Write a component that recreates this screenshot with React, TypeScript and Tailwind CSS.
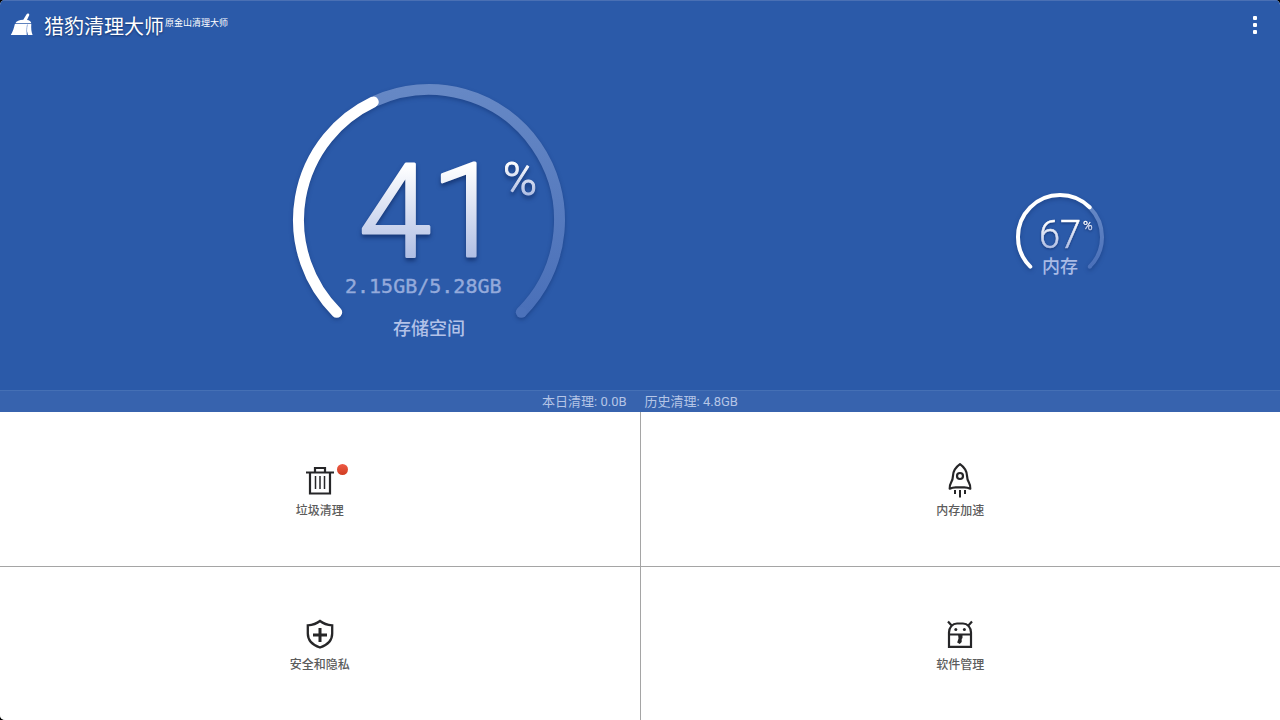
import type { ReactNode } from 'react'

type GaugeProps = {
  percent: number
  size: number
  stroke: number
  label: string
  children: ReactNode
}

// Both dials sweep 270 degrees, starting at the lower left.
function polar(center: number, radius: number, degrees: number) {
  const rad = ((degrees - 90) * Math.PI) / 180
  return `${(center + radius * Math.cos(rad)).toFixed(2)} ${(center + radius * Math.sin(rad)).toFixed(2)}`
}

function arc(center: number, radius: number, from: number, to: number) {
  const large = to - from > 180 ? 1 : 0
  return `M${polar(center, radius, from)} A${radius} ${radius} 0 ${large} 1 ${polar(center, radius, to)}`
}

function Gauge({ percent, size, stroke, label, children }: GaugeProps) {
  const center = size / 2
  const radius = (size - stroke) / 2
  const end = -135 + (percent / 100) * 270

  return (
    <svg
      role="img"
      aria-label={label}
      width={size}
      height={size}
      viewBox={`0 0 ${size} ${size}`}
      className="block overflow-visible"
    >
      <defs>
        <linearGradient id={`digits-${size}`} x1="0" y1="0" x2="0" y2="1">
          <stop offset="0.2" stopColor="#ffffff" />
          <stop offset="0.85" stopColor="#a9b9e2" />
        </linearGradient>
        <linearGradient id={`track-${size}`} x1="0" y1="0" x2="0" y2="1">
          <stop offset="0" stopColor="#6688c5" />
          <stop offset="1" stopColor="#4a70b9" />
        </linearGradient>
      </defs>
      <g fill="none" strokeWidth={stroke} className="drop-shadow-[0_2px_2px_rgba(0,20,70,0.3)]">
        <path d={arc(center, radius, end, 135)} stroke={`url(#track-${size})`} />
        <circle
          cx={center + radius * Math.SQRT1_2}
          cy={center + radius * Math.SQRT1_2}
          r={stroke / 2}
          fill="#4c72ba"
          stroke="none"
        />
        <path d={arc(center, radius, -135, end - 1)} stroke="#fff" strokeLinecap="round" />
      </g>
      {children}
    </svg>
  )
}

function BroomIcon() {
  return (
    <svg width="24" height="24" viewBox="0 0 24 24" fill="#fff" aria-hidden="true">
      <path d="M16.6 1.2c.8-1.5 3.2-.5 2.6 1.1L17 7.1c2.5.3 4 1.3 4.3 3.1H5.4c1-2 4-3.4 7.9-3.4z" />
      <path d="M4.9 11h16.4c-.3 4 0 8 1.3 11H18l-.8-3.5-.4 3.5H.8c1.9-3 3.1-7 4.1-11z" />
      <path d="M17.5 11.5c-1 4-1.2 7-.6 10" fill="none" stroke="#9db4de" />
    </svg>
  )
}

function TrashIcon() {
  return (
    <svg width="40" height="36" viewBox="0 0 40 36" fill="none" stroke="#262628" aria-hidden="true">
      <path d="M6 10.5h28M10 10.5v21h20v-21M15 10V6h10v4" strokeWidth="2.2" />
      <path d="M15.5 14v13M20 14v13M24.5 14v13" strokeWidth="1.5" />
    </svg>
  )
}

function RocketIcon() {
  return (
    <svg width="40" height="36" viewBox="0 0 40 36" fill="none" stroke="#262628" strokeWidth="2.2" aria-hidden="true">
      <path
        d="M20 2.2c-4.2 3-6.8 7-7 11.5-.1 3-.8 5-2 7-1 1.700-1.500 3.600-1.300 6 2-1 4-1.400 6-1.400h8.600c2 0 4 .4 6 1.400.2-2.400-.3-4.300-1.300-6-1.200-2-1.900-4-2-7-.2-4.500-2.800-8.500-7-11.500z"
        strokeLinejoin="round"
      />
      <circle cx="20" cy="14" r="3" />
      <path d="M15 28v4M20 28v7.5M25 28v4" strokeWidth="2" />
    </svg>
  )
}

function ShieldIcon() {
  return (
    <svg width="40" height="36" viewBox="0 0 40 36" fill="none" stroke="#262628" aria-hidden="true">
      <path
        d="M20 5c-3.5 2.8-7.5 4-12.2 4.3v8.2c0 6.8 4.7 11.5 12.2 14 7.5-2.5 12.2-7.2 12.2-14V9.3C27.5 9 23.5 7.8 20 5z"
        strokeWidth="2.3"
      />
      <path d="M20 12v14M13 19h14" strokeWidth="3" />
    </svg>
  )
}

function AndroidBoxIcon() {
  return (
    <svg width="40" height="36" viewBox="0 0 40 36" fill="none" stroke="#262628" strokeWidth="2.2" aria-hidden="true">
      <path d="M9 18.5h22v12.4H9zM9 18.5v-2c0-5 3.5-9 8-9h6c4.5 0 8 4 8 9v2M12.5 10.5L8 5.5M27.5 10.5L32 5.5" />
      <circle cx="15.8" cy="13.5" r="1.5" fill="#262628" stroke="none" />
      <circle cx="24.4" cy="13.5" r="1.5" fill="#262628" stroke="none" />
      <path d="M18 18h4.5v4l-.8 1v3l-2 2-2.5-1.500 1.300-4z" fill="#262628" stroke="none" />
    </svg>
  )
}

const tiles = [
  { label: '垃圾清理', icon: <TrashIcon />, alert: true },
  { label: '内存加速', icon: <RocketIcon />, alert: false },
  { label: '安全和隐私', icon: <ShieldIcon />, alert: false },
  { label: '软件管理', icon: <AndroidBoxIcon />, alert: false },
]

export default function App() {
  return (
    <div className="min-h-screen bg-black font-[Roboto,'Noto_Sans_CJK_SC',sans-serif]">
      <div className="flex min-h-screen flex-col overflow-hidden rounded-t-[5px] rounded-bl-[5px] bg-white">
        <section className="flex flex-[412_1_0px] flex-col border-t border-[#4a70b4] bg-[#2b5aa9]">
          <header className="flex h-12 items-center justify-between pr-[17px] pl-2.5 text-white">
            <div className="flex items-center">
              <BroomIcon />
              <h1 className="ml-2.5 pt-1 text-[20px] leading-6 text-shadow-[0_1px_2px_rgba(0,20,60,0.6)]">猎豹清理大师</h1>
              <span className="mb-1 ml-px text-[9px] leading-3">原金山清理大师</span>
            </div>
            <button type="button" aria-label="菜单" className="flex h-10 w-4 flex-col items-center justify-center gap-[3px]">
              <span className="size-1 rounded-[1px] bg-white" />
              <span className="size-1 rounded-[1px] bg-white" />
              <span className="size-1 rounded-[1px] bg-white" />
            </button>
          </header>

          <div className="grid grow grid-cols-[17fr_8fr] items-center pr-[18px]">
            <div className="flex justify-center">
              <Gauge percent={41} size={272} stroke={11} label="存储空间 41%">
                <g
                  fill="url(#digits-272)"
                  stroke="url(#digits-272)"
                  strokeLinejoin="round"
                  className="font-[Roboto,sans-serif] font-light drop-shadow-[0_3px_2px_rgba(0,20,70,0.5)]"
                >
                  <text x="66" y="172" fontSize="130" strokeWidth="3">41</text>
                  <text x="210" y="111" fontSize="46" strokeWidth="1">%</text>
                </g>
                <text
                  x="52"
                  y="209"
                  fontSize="20"
                  fill="#94aadb"
                  stroke="#94aadb"
                  strokeWidth="0.4"
                  className="font-['DejaVu_Sans_Mono',monospace]"
                >
                  2.15GB/5.28GB
                </text>
                <text x="136" y="251" fontSize="18" textAnchor="middle" fill="#b3c2e8" className="font-medium">
                  存储空间
                </text>
              </Gauge>
            </div>
            <div className="flex justify-center pt-[34px]">
              <Gauge percent={67} size={88} stroke={4} label="内存 67%">
                <g
                  fill="url(#digits-88)"
                  stroke="url(#digits-88)"
                  strokeWidth="0.5"
                  className="font-[Roboto,sans-serif] font-light drop-shadow-[0_1px_1px_rgba(0,20,70,0.5)]"
                >
                  <text x="23" y="55" fontSize="38">67</text>
                  <text x="67" y="37" fontSize="13">%</text>
                </g>
                <text x="44" y="80" fontSize="18" textAnchor="middle" fill="#a9bbe5" className="font-medium">
                  内存
                </text>
              </Gauge>
            </div>
          </div>

          <div className="flex h-[22px] items-center justify-center gap-[18px] border-t border-[#4570b5] bg-[#3763ae] text-[13px] leading-5 text-[#b5c5e6]">
            <span>本日清理: 0.0B</span>
            <span>历史清理: 4.8GB</span>
          </div>
        </section>

        <main className="grid flex-[308_1_0px] grid-cols-2 grid-rows-2 gap-px bg-[#a5a5a5]">
          {tiles.map((tile) => (
            <button
              key={tile.label}
              type="button"
              className="flex flex-col items-center justify-center gap-[5px] bg-white pt-0.5"
            >
              <span className="relative">
                {tile.icon}
                {tile.alert ? (
                  <span className="absolute top-0.5 -right-2 size-[11px] rounded-full bg-linear-to-b from-[#ee5a45] to-[#d03d20]" />
                ) : null}
              </span>
              <span className="text-[12px] leading-4 font-medium text-[#5c5c5c]">{tile.label}</span>
            </button>
          ))}
        </main>
      </div>
    </div>
  )
}
